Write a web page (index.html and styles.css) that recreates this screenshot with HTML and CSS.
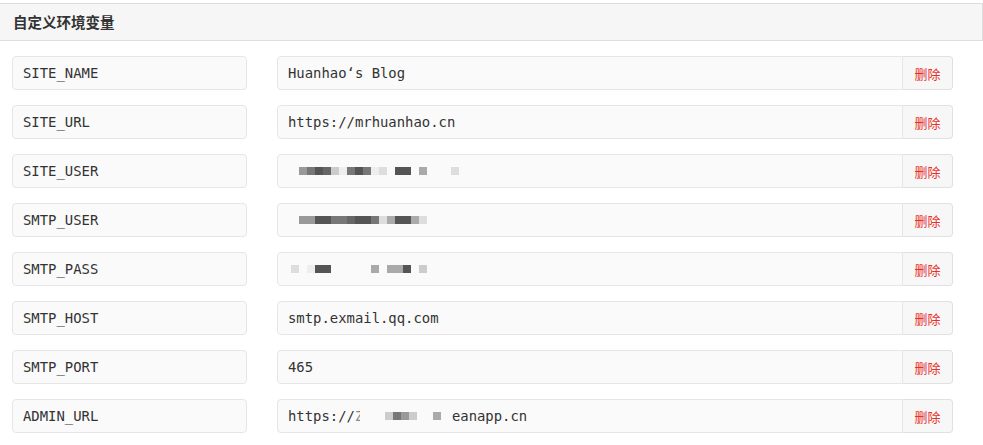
FILE: index.html
```html
<!DOCTYPE html>
<html lang="zh-CN">
<head>
<meta charset="utf-8">
<title>自定义环境变量</title>
<link rel="stylesheet" href="styles.css">
</head>
<body>
<div class="panel">
  <div class="panel-head">自定义环境变量</div>
  <div class="rows">
    <div class="row">
      <div class="key">SITE_NAME</div>
      <div class="val-group"><div class="val">Huanhao‘s Blog</div><button class="del">删除</button></div>
    </div>
    <div class="row">
      <div class="key">SITE_URL</div>
      <div class="val-group"><div class="val">https://mrhuanhao.cn</div><button class="del">删除</button></div>
    </div>
    <div class="row">
      <div class="key">SITE_USER</div>
      <div class="val-group"><div class="val masked">
        <span class="mosaic">
          <i class="g9"></i><i class="g7"></i><i class="g5"></i><i class="g6"></i><i class="gc"></i><i class="ge"></i><i class="g7"></i><i class="g5"></i><i class="g7"></i><i class="ge"></i><i class="gd"></i><i class="gn"></i><i class="g5"></i><i class="g5"></i><i class="gn"></i><i class="ga"></i><i class="gn"></i><i class="gn"></i><i class="gn"></i><i class="gd"></i>
        </span>
      </div><button class="del">删除</button></div>
    </div>
    <div class="row">
      <div class="key">SMTP_USER</div>
      <div class="val-group"><div class="val masked">
        <span class="mosaic">
          <i class="g9"></i><i class="g9"></i><i class="g5"></i><i class="g5"></i><i class="g7"></i><i class="g7"></i><i class="g6"></i><i class="g5"></i><i class="g5"></i><i class="g7"></i><i class="gd"></i><i class="ga"></i><i class="g5"></i><i class="g5"></i><i class="ga"></i><i class="gd"></i>
        </span>
      </div><button class="del">删除</button></div>
    </div>
    <div class="row">
      <div class="key">SMTP_PASS</div>
      <div class="val-group"><div class="val masked">
        <span class="mosaic m-pass">
          <i class="gd"></i><i class="gn"></i><i class="ge"></i><i class="g5"></i><i class="g5"></i><i class="gn"></i><i class="gn"></i><i class="gn"></i><i class="gn"></i><i class="gn"></i><i class="ga"></i><i class="gn"></i><i class="ga"></i><i class="ga"></i><i class="g5"></i><i class="gn"></i><i class="gc"></i>
        </span>
      </div><button class="del">删除</button></div>
    </div>
    <div class="row">
      <div class="key">SMTP_HOST</div>
      <div class="val-group"><div class="val">smtp.exmail.qq.com</div><button class="del">删除</button></div>
    </div>
    <div class="row">
      <div class="key">SMTP_PORT</div>
      <div class="val-group"><div class="val">465</div><button class="del">删除</button></div>
    </div>
    <div class="row">
      <div class="key">ADMIN_URL</div>
      <div class="val-group"><div class="val masked"><span>https://</span><span class="cut">Z</span><span class="mosaic m-admin"><i class="gc"></i><i class="g7"></i><i class="g9"></i><i class="gc"></i><i class="gn"></i><i class="gn"></i><i class="ga"></i></span><span class="tail">eanapp.cn</span></div><button class="del">删除</button></div>
    </div>
  </div>
</div>
</body>
</html>
```

FILE: styles.css
```css
html, body {
  margin: 0;
  padding: 0;
  background: #ffffff;
}

body {
  font-family: "DejaVu Sans", "Noto Sans CJK SC", sans-serif;
  color: #333333;
}

.panel {
  padding-top: 3px;
}

.panel-head {
  height: 36px;
  line-height: 36px;
  padding-left: 13px;
  background: #f6f6f6;
  border-top: 1px solid #dddddd;
  border-bottom: 1px solid #dddddd;
  border-right: 1px solid #dddddd;
  font-family: "Noto Sans CJK SC", sans-serif;
  font-size: 14.5px;
  font-weight: 700;
  color: #333333;
}

.rows {
  display: flex;
  flex-direction: column;
  gap: 15px;
  padding: 15px 30px 0 12px;
}

.row {
  display: flex;
  align-items: center;
  gap: 30px;
  height: 34px;
}

.key, .val {
  box-sizing: border-box;
  height: 34px;
  line-height: 32px;
  padding: 0 10px;
  border: 1px solid #e6e6e6;
  border-radius: 4px;
  background: #fafafa;
  font-family: "DejaVu Sans Mono", "Liberation Mono", monospace;
  font-size: 13.9px;
  color: #333333;
  white-space: nowrap;
  overflow: hidden;
}

.key {
  width: 235px;
  flex: none;
}

.val-group {
  display: flex;
  flex: 1;
}

.val {
  flex: 1;
  border-top-right-radius: 0;
  border-bottom-right-radius: 0;
}

.del {
  box-sizing: border-box;
  width: 50px;
  height: 34px;
  margin: 0;
  padding: 0;
  border: 1px solid #e0e0e0;
  border-left: none;
  border-radius: 0 4px 4px 0;
  background: #f7f7f7;
  color: #e8302a;
  font-family: "Noto Sans CJK SC", sans-serif;
  font-size: 13px;
}

.masked {
  display: flex;
  align-items: center;
}

.mosaic {
  display: inline-flex;
  align-items: center;
  height: 8px;
  margin-left: 11px;
}

.mosaic i {
  display: inline-block;
  width: 8px;
  height: 8px;
}

.m-pass {
  margin-left: 3px;
}

.m-admin {
  margin-left: 25px;
}

.cut {
  display: inline-block;
  width: 5px;
  overflow: hidden;
  color: #888888;
}

.tail {
  margin-left: 11px;
}

.g5 { background: #555555; }
.g6 { background: #666666; }
.g7 { background: #777777; }
.g9 { background: #999999; }
.ga { background: #aaaaaa; }
.gc { background: #cccccc; }
.gd { background: #dddddd; }
.ge { background: #eeeeee; }
.gn { background: transparent; }
```
